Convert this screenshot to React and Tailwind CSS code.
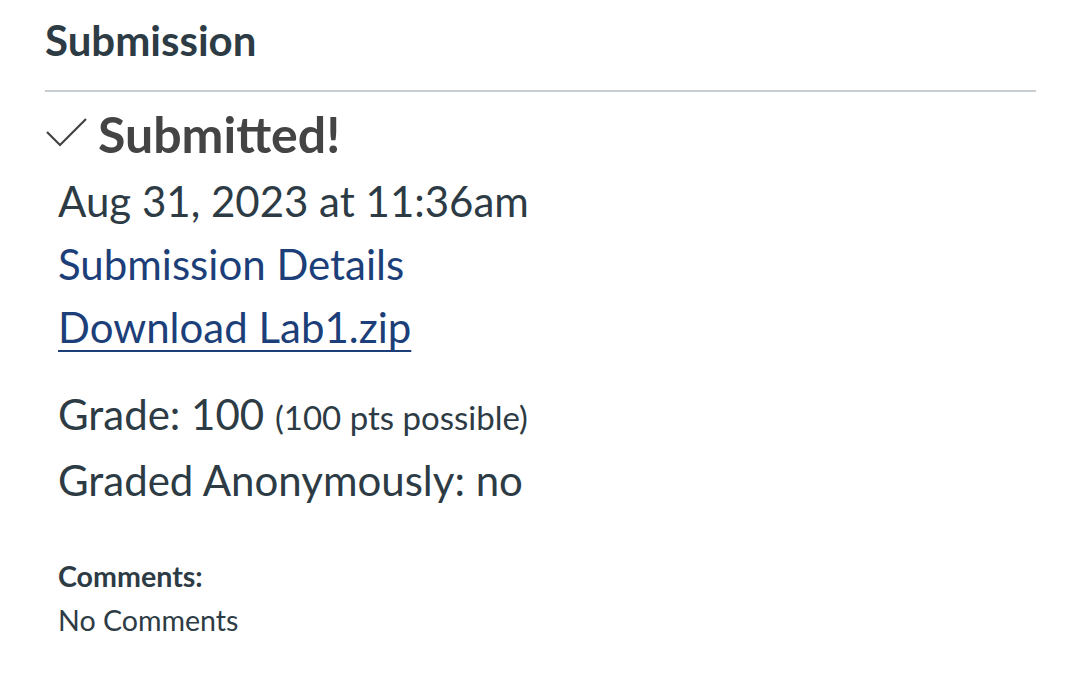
import React from 'react';

const CheckIcon = () => (
  <svg width="44" height="32" viewBox="0 0 44 32" fill="none" className="shrink-0">
    <path d="M2 14 L15 27 L41 1" stroke="#444444" strokeWidth="2.2" />
  </svg>
);

const App = () => {
  return (
    <div className="min-h-screen bg-white font-['Lato','Liberation_Sans',sans-serif] text-[#2d3b45]">
      <div className="pl-[45px] pr-[43px] pt-[12px]">

        {/* HEADER */}
        <h2 className="text-[42px] font-bold leading-[56px] pb-[22px] border-b-2 border-[#c7cdd1]">
          Submission
        </h2>

        {/* STATUS */}
        <div className="flex items-center gap-[9px] mt-[12px]">
          <CheckIcon />
          <span className="text-[50px] font-bold text-[#444444] leading-[60px]">Submitted!</span>
        </div>

        <div className="pl-[13px] mt-[6px] text-[42px] leading-[63px]">
          <div>Aug 31, 2023 at 11:36am</div>
          <div>
            <a href="#" className="text-[#1d3f79]">Submission Details</a>
          </div>
          <div>
            <a href="#" className="text-[#1d3f79] underline underline-offset-[7px] decoration-2">Download Lab1.zip</a>
          </div>

          {/* GRADE */}
          <div className="mt-[24px]">
            Grade: 100 <span className="text-[33px]">(100 pts possible)</span>
          </div>
          <div>Graded Anonymously: no</div>

          {/* COMMENTS */}
          <div className="mt-[42px] text-[28.6px] leading-[44px]">
            <div className="font-bold">Comments:</div>
            <div>No Comments</div>
          </div>
        </div>

      </div>
    </div>
  );
};

export default App;
